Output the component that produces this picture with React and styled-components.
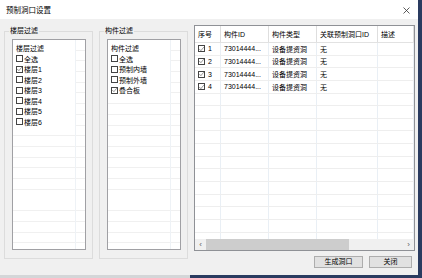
import React from "react";
import styled, { createGlobalStyle } from "styled-components";

const GlobalStyle = createGlobalStyle`
  html, body {
    margin: 0;
    padding: 0;
  }
  body {
    font-family: "Liberation Sans", "Noto Sans CJK SC", sans-serif;
    color: #000;
  }
`;

const Desktop = styled.div`
  width: 422px;
  height: 278px;
  overflow: hidden;
  background: linear-gradient(to right, #d4d6d8 0 190px, #2a3b60 190px);
`;

const Dialog = styled.div`
  width: 418px;
  height: 275px;
  display: flex;
  flex-direction: column;
  background: #f0f0f0;
`;

const TitleBar = styled.div`
  height: 19px;
  flex: none;
  display: flex;
  align-items: center;
  justify-content: space-between;
  padding: 2px 8px 0 6px;
  box-sizing: border-box;
  background: #ffffff;
`;

const Title = styled.span`
  font-size: 7.5px;
  line-height: 10px;
`;

const Body = styled.div`
  flex: 1;
  display: flex;
  gap: 6px;
  padding: 6px 0 0 4px;
  border-left: 1px solid #b8bcbc;
  margin-left: -1px;
`;

const GroupBox = styled.fieldset`
  box-sizing: border-box;
  width: 89px;
  height: 233px;
  margin: 1px 0 0;
  padding: 2.5px 6px 8px 7px;
  border: 1px solid #dcdcdc;
  display: flex;
  flex-direction: column;
`;

const GroupLabel = styled.legend`
  font-size: 7px;
  line-height: 10px;
  padding: 0 1px;
  margin-left: -3px;
`;

const List = styled.div`
  flex: 1;
  display: flex;
  border: 1px solid #a0a0a4;
  background: #fff repeating-linear-gradient(
      to bottom,
      transparent 0 9.7px,
      #f0f0f0 9.7px 10.7px
    );
`;

const ListMain = styled.div`
  width: 62px;
  border-right: 1px solid #eef2f6;
`;

const ListContent = styled.div`
  background: #fff;
  padding: 4px 0 2px 3px;
`;

const ListHeader = styled.div`
  font-size: 7px;
  line-height: 10px;
`;

const CheckRow = styled.label`
  display: flex;
  align-items: center;
  gap: 1px;
  height: 10.5px;
  font-size: 7px;
  white-space: nowrap;
`;

const Box = styled.span`
  box-sizing: border-box;
  width: 7px;
  height: 7px;
  flex: none;
  border: 1px solid #444;
  background: #fff;
  display: flex;
  align-items: center;
  justify-content: center;
`;

const RightCol = styled.div`
  width: 221px;
  display: flex;
  flex-direction: column;
`;

const Table = styled.div`
  height: 226px;
  box-sizing: border-box;
  border: 1px solid #8f9196;
  background: #fff;
  display: flex;
  flex-direction: column;
`;

const cols = "26px 48px 48px 61px 1fr";

const HeadRow = styled.div`
  display: grid;
  grid-template-columns: ${cols};
  height: 17px;
  flex: none;
  border-bottom: 1px solid #e2e2e2;
  box-sizing: border-box;
`;

const HeadCell = styled.div`
  display: flex;
  align-items: center;
  padding-left: 3px;
  border-right: 1px solid #dedede;
  font-size: 7px;
  white-space: nowrap;
  overflow: hidden;
`;

const Rows = styled.div`
  flex: 1;
  overflow: hidden;
`;

const Row = styled.div`
  display: grid;
  grid-template-columns: ${cols};
  height: 12.65px;
  box-sizing: border-box;
  border-bottom: 1px solid #eeeeee;
`;

const Cell = styled.div`
  display: flex;
  align-items: center;
  gap: 3px;
  padding-left: 3px;
  border-right: 1px solid #e9eff5;
  font-size: 7px;
  white-space: nowrap;
  overflow: hidden;
`;

const ScrollBar = styled.div`
  height: 11px;
  flex: none;
  display: flex;
  background: #f0f0f0;
`;

const Arrow = styled.div`
  width: 11px;
  flex: none;
  display: flex;
  align-items: center;
  justify-content: center;
  color: #606060;
  font-size: 8px;
  line-height: 1;
`;

const Track = styled.div`
  flex: 1;
`;

const Thumb = styled.div`
  width: 143px;
  height: 100%;
  background: #cdcdcd;
`;

const Footer = styled.div`
  display: flex;
  justify-content: flex-end;
  gap: 6px;
  margin-top: 5px;
  padding-right: 3px;
`;

const Button = styled.button`
  width: ${(p) => p.$w}px;
  height: 12px;
  padding: 0;
  font-family: inherit;
  font-size: 7px;
  line-height: 10px;
  color: #000;
  background: #e1e1e1;
  border: 1px solid #adadad;
`;

function Check({ checked }) {
  return (
    <Box>
      {checked && (
        <svg width="6" height="6" viewBox="0 0 10 10">
          <path d="M0.5 5 L3.8 8.4 L9.6 1.2" fill="none" stroke="#555" strokeWidth="1.2" />
        </svg>
      )}
    </Box>
  );
}

function FilterGroup({ title, items }) {
  return (
    <GroupBox>
      <GroupLabel>{title}</GroupLabel>
      <List>
        <ListMain>
          <ListContent>
            <ListHeader>{title}</ListHeader>
            {items.map((it) => (
              <CheckRow key={it.label}>
                <Check checked={it.checked} />
                {it.label}
              </CheckRow>
            ))}
          </ListContent>
        </ListMain>
      </List>
    </GroupBox>
  );
}

const floors = [
  { label: "全选" },
  { label: "楼层1", checked: true },
  { label: "楼层2" },
  { label: "楼层3" },
  { label: "楼层4" },
  { label: "楼层5" },
  { label: "楼层6" },
];

const parts = [
  { label: "全选" },
  { label: "预制内墙" },
  { label: "预制外墙" },
  { label: "叠合板", checked: true },
];

const headers = ["序号", "构件ID", "构件类型", "关联预制洞口ID", "描述"];

const data = [1, 2, 3, 4].map((n) => ({
  n,
  id: "73014444...",
  type: "设备提资洞",
  hole: "无",
}));

export default function App() {
  return (
    <>
      <GlobalStyle />
      <Desktop>
        <Dialog>
          <TitleBar>
            <Title>预制洞口设置</Title>
            <svg width="7" height="7" viewBox="0 0 7 7">
              <path d="M0.5 0.5 L6.5 6.5 M6.5 0.5 L0.5 6.5" stroke="#333" strokeWidth="0.8" />
            </svg>
          </TitleBar>
          <Body>
            <FilterGroup title="楼层过滤" items={floors} />
            <FilterGroup title="构件过滤" items={parts} />
            <RightCol>
              <Table>
                <HeadRow>
                  {headers.map((h) => (
                    <HeadCell key={h}>{h}</HeadCell>
                  ))}
                </HeadRow>
                <Rows>
                  {data.map((r) => (
                    <Row key={r.n}>
                      <Cell>
                        <Check checked />
                        {r.n}
                      </Cell>
                      <Cell>{r.id}</Cell>
                      <Cell>{r.type}</Cell>
                      <Cell>{r.hole}</Cell>
                      <Cell />
                    </Row>
                  ))}
                  {Array.from({ length: 13 }).map((_, i) => (
                    <Row key={"e" + i}>
                      <Cell />
                      <Cell />
                      <Cell />
                      <Cell />
                      <Cell />
                    </Row>
                  ))}
                </Rows>
                <ScrollBar>
                  <Arrow>‹</Arrow>
                  <Track>
                    <Thumb />
                  </Track>
                  <Arrow>›</Arrow>
                </ScrollBar>
              </Table>
              <Footer>
                <Button $w={49}>生成洞口</Button>
                <Button $w={43}>关闭</Button>
              </Footer>
            </RightCol>
          </Body>
        </Dialog>
      </Desktop>
    </>
  );
}
